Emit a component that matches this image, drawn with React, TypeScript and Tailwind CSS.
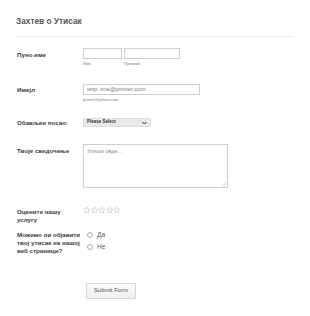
import React from 'react';

const Star = () => (
  <svg width="7.6" height="8" viewBox="0 0 24 24" className="shrink-0">
    <path
      d="M12 2.5l2.9 6.6 7.1.6-5.4 4.7 1.6 7-6.2-3.7-6.2 3.7 1.6-7L2 9.7l7.1-.6z"
      fill="none"
      stroke="#b8b8b8"
      strokeWidth="1.6"
      strokeLinejoin="round"
    />
  </svg>
);

const Radio = ({ label }: { label: string }) => (
  <div className="flex items-center h-[10px]">
    <span className="w-[6px] h-[6px] rounded-full border border-[#aaa] bg-white ml-[3px]" />
    <span className="ml-[4px] text-[6.5px] text-[#555]">{label}</span>
  </div>
);

export default function App() {
  return (
    <div
      className="w-[310px] h-[316px] bg-white overflow-hidden"
      style={{ fontFamily: '"Liberation Sans", Arial, sans-serif' }}
    >
      <div className="pl-[16px] pr-[17px]">
        <div className="pt-[15px] pb-[9px] text-[8.3px] font-bold text-[#555] leading-[12px]">Захтев о Утисак</div>
        <div className="h-px bg-[#ececec]" />

        {/* name */}
        <div className="grid grid-cols-[67px_1fr] mt-[11px] text-[6.2px]">
          <div className="pl-[1px] pt-[2px] font-bold text-[#3a3a3a]">Пуно име</div>
          <div className="flex gap-[2px]">
            <div>
              <div className="w-[39px] h-[11px] border border-[#ccc]" />
              <div className="text-[4px] text-[#777] mt-[2px] leading-[5px]">Име</div>
            </div>
            <div>
              <div className="w-[56px] h-[11px] border border-[#ccc]" />
              <div className="text-[4px] text-[#777] mt-[2px] leading-[5px]">Презиме</div>
            </div>
          </div>
        </div>

        {/* email */}
        <div className="grid grid-cols-[67px_1fr] mt-[18px] text-[6.2px]">
          <div className="pl-[1px] pt-[1px] font-bold text-[#3a3a3a]">Имејл</div>
          <div>
            <div className="w-[117px] h-[11px] border border-[#ccc] flex items-center pl-[3px] text-[6px] text-[#777]">
              нпр: ime@primer.com
            </div>
            <div className="text-[4px] text-[#777] mt-[2px] leading-[5px]">primer@primer.com</div>
          </div>
        </div>

        {/* select */}
        <div className="grid grid-cols-[67px_1fr] mt-[16px] text-[6.2px] items-center">
          <div className="pl-[1px] font-bold text-[#3a3a3a]">Обављен посао:</div>
          <div className="w-[68px] h-[9px] bg-[#eaeaea] border border-[#ddd] flex items-center justify-between px-[3px]">
            <span className="text-[4.5px] font-bold text-[#333]">Please Select</span>
            <svg width="5" height="4" viewBox="0 0 10 6">
              <path d="M1 1l4 4 4-4" fill="none" stroke="#222" strokeWidth="2" />
            </svg>
          </div>
        </div>

        {/* textarea */}
        <div className="grid grid-cols-[67px_1fr] mt-[17px] text-[6.2px]">
          <div className="pl-[1px] pt-[2px] font-bold text-[#3a3a3a]">Твоје сведочење</div>
          <div className="relative w-[145px] h-[44px] border border-[#ccc] pl-[3px] pt-[2px] text-[5.5px] text-[#888]">
            Упиши овде...
            <svg width="4" height="4" viewBox="0 0 8 8" className="absolute right-[1px] bottom-[1px]">
              <path d="M7 2L2 7M7 5L5 7" stroke="#999" strokeWidth="1" />
            </svg>
          </div>
        </div>

        {/* rating */}
        <div className="grid grid-cols-[67px_1fr] mt-[18px] text-[6.2px]">
          <div className="pl-[1px] pt-[2px] font-bold text-[#3a3a3a] leading-[8px]">
            Оцените нашу
            <br />
            услугу
          </div>
          <div className="flex">
            <Star />
            <Star />
            <Star />
            <Star />
            <Star />
          </div>
        </div>

        {/* radios */}
        <div className="grid grid-cols-[67px_1fr] mt-[7px] text-[6.2px]">
          <div className="pl-[1px] font-bold text-[#3a3a3a] leading-[8px] whitespace-nowrap">
            Можемо ли објавити
            <br />
            твој утисак на нашој
            <br />
            веб страници?
          </div>
          <div className="-mt-[1px] pl-[1px]">
            <Radio label="Да" />
            <div className="h-[2px]" />
            <Radio label="Не" />
          </div>
        </div>

        {/* submit */}
        <div className="pl-[70px] mt-[20px]">
          <button className="w-[50px] h-[16px] border border-[#d4d4d4] rounded-[1px] bg-gradient-to-b from-[#fdfdfd] to-[#efefef] text-[6px] text-[#555]">
            Submit Form
          </button>
        </div>
      </div>
    </div>
  );
}
